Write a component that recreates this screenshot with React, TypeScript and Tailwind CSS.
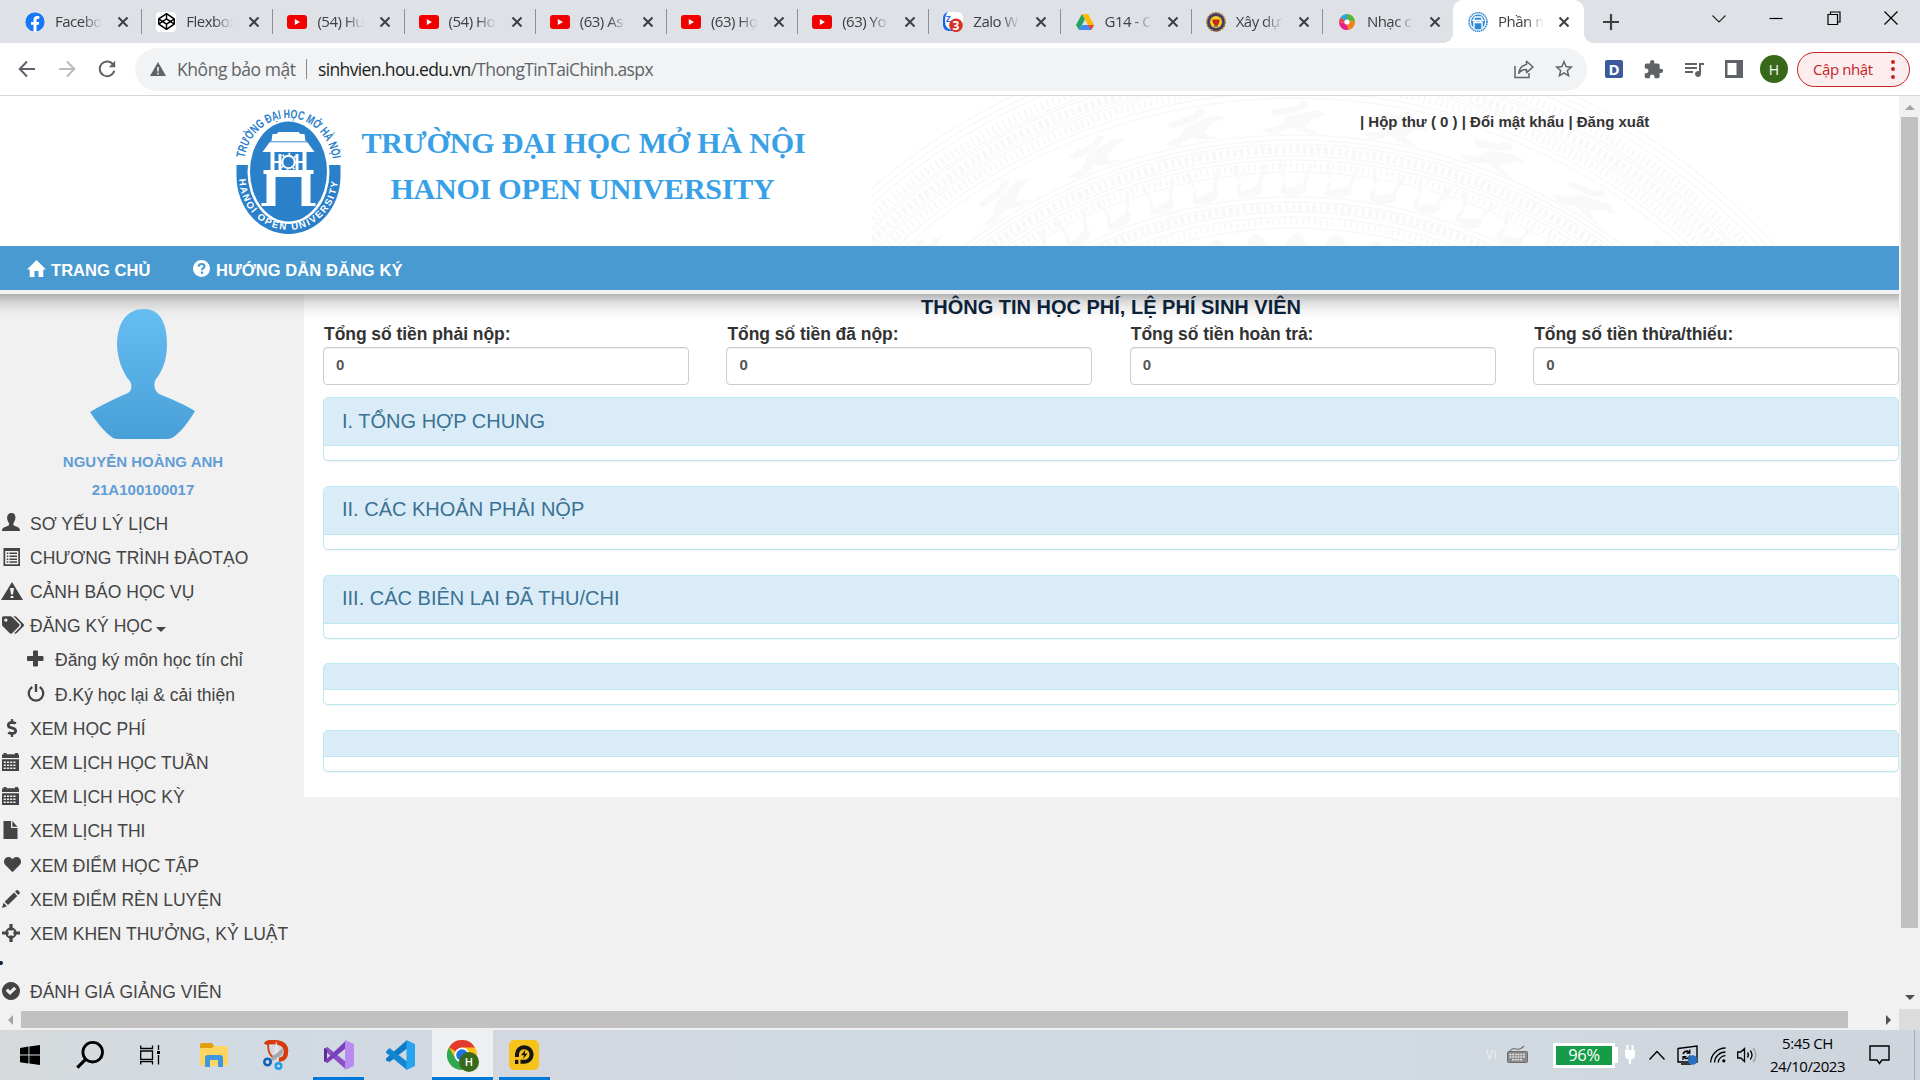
import React from "react";
import { FaFacebook, FaCodepen, FaTags, FaDollarSign, FaHeart } from "react-icons/fa";
import { MdExtension, MdStarBorder, MdQueueMusic } from "react-icons/md";

type SvgProps = { className?: string };

/* ---------- favicons ---------- */

const YouTube = () => (
  <svg viewBox="0 0 20 20" className="size-5">
    <rect x="0" y="3" width="20" height="14" rx="3" fill="#f20000" />
    <path d="M7.8 7 L13 10 L7.8 13 Z" fill="#fff" />
  </svg>
);

const Codepen = () => (
  <span className="flex size-5 items-center justify-center rounded-sm bg-white">
    <FaCodepen className="size-[17px] text-black" />
  </span>
);

const Zalo = () => (
  <svg viewBox="0 0 20 20" className="size-5">
    <rect x="0" y="0" width="19" height="19" rx="6" fill="#1666e8" />
    <path d="M5 0 H14 Q20 0 20 6 V12 Q20 18 14 18 H9 Q2 17 2 9 Q2 3 5 0 Z" fill="#fff" />
    <text x="3" y="10" fontSize="8" fontWeight="700" fill="#1666e8" fontFamily="Open Sans">Z</text>
    <circle cx="13" cy="13.3" r="6.8" fill="#d93025" />
    <text x="13" y="17.6" textAnchor="middle" fontSize="12" fontWeight="700" fill="#fff" fontFamily="Open Sans">3</text>
  </svg>
);

const Drive = () => (
  <svg viewBox="0 0 20 20" className="size-5">
    <path d="M7 2 L1 13 L4 18 L10 7.2 Z" fill="#1fa463" />
    <path d="M7 2 H13 L19 13 H13 Z" fill="#ffba00" />
    <path d="M6.8 13 H19 L16 18 H4 Z" fill="#4688f4" />
    <path d="M13 13 H19 L16 18 Z" fill="#ea4335" />
  </svg>
);

const Seal = () => (
  <svg viewBox="0 0 20 20" className="size-5">
    <circle cx="10" cy="10" r="9.2" fill="#4a3a6b" stroke="#a5772c" strokeWidth="1.5" strokeDasharray="2 1" />
    <circle cx="10" cy="10" r="6" fill="#f0d51c" />
    <path d="M6.5 7.5 H13.5 V10 L12 13 H8.5 L6.5 10 Z" fill="#c9251d" />
    <path d="M8 14 H12" stroke="#4a3a6b" strokeWidth="1.2" />
  </svg>
);

const Music = () => (
  <svg viewBox="0 0 20 20" className="size-5">
    <path d="M10 10 L3.5 5.5 A8 8 0 0 1 10 2 Z" fill="#2aa4e4" />
    <path d="M10 10 V2 A8 8 0 0 1 18 9 Z" fill="#5cb531" />
    <path d="M10 10 L18 9 A8 8 0 0 1 11 18 Z" fill="#f57f17" />
    <path d="M10 10 L11 18 A8 8 0 0 1 2 11 Z" fill="#e91e83" />
    <path d="M10 10 L2 11 A8 8 0 0 1 3.5 5.5 Z" fill="#e04848" />
    <circle cx="10" cy="10" r="2.6" fill="#fff" />
  </svg>
);

const HouMini = () => (
  <svg viewBox="0 0 20 20" className="size-5">
    <ellipse cx="10" cy="10" rx="9" ry="9.3" fill="none" stroke="#2d87d3" strokeWidth="1.6" strokeDasharray="1.4 .6" />
    <ellipse cx="10" cy="10" rx="7" ry="7.6" fill="#2d87d3" />
    <path d="M6 16 V10.5 H14 V16 M5 8.5 L7 5 H13 L15 8.5 Z M7.5 9 V10 M12.5 9 V10" fill="none" stroke="#fff" strokeWidth="1.4" />
  </svg>
);

const tabs = [
  { title: "Facebo", icon: <FaFacebook className="size-5 rounded-full bg-white text-[#1877f2]" /> },
  { title: "Flexbox", icon: <Codepen /> },
  { title: "(54) Hu", icon: <YouTube /> },
  { title: "(54) Ho", icon: <YouTube /> },
  { title: "(63) As", icon: <YouTube /> },
  { title: "(63) Họ", icon: <YouTube /> },
  { title: "(63) Yo", icon: <YouTube /> },
  { title: "Zalo W", icon: <Zalo /> },
  { title: "G14 - C", icon: <Drive /> },
  { title: "Xây dự", icon: <Seal /> },
  { title: "Nhạc c", icon: <Music /> },
];

const CloseX = () => (
  <svg viewBox="0 0 12 12" className="size-3 shrink-0">
    <path d="M1.5 1.5 L10.5 10.5 M10.5 1.5 L1.5 10.5" stroke="#3c4043" strokeWidth="2" />
  </svg>
);

function Tab({ title, icon, active }: { title: string; icon: React.ReactNode; active?: boolean }) {
  return (
    <div
      className={
        active
          ? "relative flex h-[43px] w-[131.2px] shrink-0 items-center rounded-t-[10px] bg-white pl-[15px] before:absolute before:bottom-0 before:-left-2.5 before:size-2.5 before:bg-[radial-gradient(circle_at_0_0,transparent_10px,#fff_10px)] after:absolute after:-right-2.5 after:bottom-0 after:size-2.5 after:bg-[radial-gradient(circle_at_100%_0,transparent_10px,#fff_10px)]"
          : "flex h-[43px] w-[131.2px] shrink-0 items-center pl-[15px]"
      }
    >
      <span className="flex size-5 shrink-0">{icon}</span>
      <span
        className={
          active
            ? "ml-2.5 w-[46px] text-[15px] tracking-[-0.5px] whitespace-nowrap text-[#3c4043] [mask-image:linear-gradient(90deg,#000_60%,transparent_100%)]"
            : "ml-2.5 w-[47px] text-[15px] tracking-[-0.5px] whitespace-nowrap text-[#3c4043] [mask-image:linear-gradient(90deg,#000_60%,transparent_100%)]"
        }
      >
        {title}
      </span>
      <span className={active ? "ml-3.5 flex" : "ml-[15px] flex"}>
        <CloseX />
      </span>
    </div>
  );
}

function TabStrip() {
  return (
    <div className="flex h-[43px] bg-[#dee1e6] pl-[10px]">
      {tabs.map((t, i) => (
        <div key={i} className="flex items-center">
          <Tab {...t} />
          {i < tabs.length - 1 && <div className="-mr-px h-[25px] w-px bg-[#8d9196]" />}
        </div>
      ))}
      <Tab title="Phần m" icon={<HouMini />} active />
      <svg viewBox="0 0 16 16" className="mt-3.5 ml-[19px] size-4 shrink-0">
        <path d="M8 0 V16 M0 8 H16" stroke="#3c4043" strokeWidth="2.2" />
      </svg>
      <div className="mt-[11px] ml-auto flex items-start gap-[43.3px] pr-[22px]">
        <svg viewBox="0 0 14 14" className="size-3.5">
          <path d="M.5 4.5 L7 11 L13.5 4.5" fill="none" stroke="#222" strokeWidth="1.1" />
        </svg>
        <svg viewBox="0 0 14 14" className="size-3.5">
          <path d="M.5 7.5 H13.5" stroke="#000" strokeWidth="1.2" />
        </svg>
        <svg viewBox="0 0 14 14" className="size-3.5">
          <path d="M1 3.5 H10.5 V13.5 H1 Z M3.5 3.5 V1 H13 V11 H10.5" fill="none" stroke="#000" strokeWidth="1.2" />
        </svg>
        <svg viewBox="0 0 14 14" className="size-3.5">
          <path d="M.5 .5 L13.5 13.5 M13.5 .5 L.5 13.5" stroke="#000" strokeWidth="1.2" />
        </svg>
      </div>
    </div>
  );
}

function Toolbar() {
  return (
    <div className="flex h-[53px] items-center border-b border-[#d5d7da] bg-white pl-[18px]">
      <svg viewBox="0 0 18 18" className="size-[18px]">
        <path d="M17 9 H2 M9 1.5 L1.7 9 L9 16.5" fill="none" stroke="#5f6368" strokeWidth="2" />
      </svg>
      <svg viewBox="0 0 18 18" className="ml-[22px] size-[18px]">
        <path d="M1 9 H16 M9 1.5 L16.3 9 L9 16.5" fill="none" stroke="#babcbe" strokeWidth="2" />
      </svg>
      <svg viewBox="0 0 18 18" className="ml-[22px] size-[18px]">
        <path d="M15.5 5 A7.4 7.4 0 1 0 16.3 10.8" fill="none" stroke="#5f6368" strokeWidth="2" />
        <path d="M17.2 .8 V7.2 H10.8 Z" fill="#5f6368" />
      </svg>
      <div className="ml-[19px] flex h-[43px] w-[1452px] items-center rounded-full bg-[#f1f3f4] pl-[15px] text-[17.5px]">
        <svg viewBox="0 0 16 14" className="h-3.5 w-4">
          <path d="M8 0 L16 14 H0 Z" fill="#5f6368" />
          <path d="M8 5 V9.5 M8 10.8 V12.5" stroke="#f1f3f4" strokeWidth="1.6" />
        </svg>
        <span className="ml-[11px] w-[119px] tracking-[-0.45px] whitespace-nowrap text-[#5f6368]">Không bảo mật</span>
        <span className="ml-2.5 h-5 w-px bg-[#868a8e]" />
        <span className="ml-[11px] tracking-[-0.63px] whitespace-nowrap text-[#5f6368]">
          <span className="text-[#1c1d20]">sinhvien.hou.edu.vn</span>/ThongTinTaiChinh.aspx
        </span>
        <svg viewBox="0 0 20 20" className="mr-[19px] ml-auto size-5">
          <path d="M1 7 V18.5 H15 V14" fill="none" stroke="#5f6368" strokeWidth="1.5" />
          <path d="M12.5 2.2 L19 8 L12.5 13.6 V10.5 Q7.5 10.3 4.8 14.3 Q5.6 6.5 12.5 5.6 Z" fill="none" stroke="#5f6368" strokeWidth="1.5" strokeLinejoin="round" />
        </svg>
        <MdStarBorder className="mr-3 size-[22px] text-[#5f6368]" />
      </div>
      <div className="ml-[18px] flex h-[18px] w-[18px] items-center justify-center rounded-[2px] bg-[#3d5a9e] text-[15px] leading-none font-bold text-white">
        D
      </div>
      <MdExtension className="ml-[20px] size-[21px] text-[#5f6368]" />
      <MdQueueMusic className="ml-[18px] size-6 text-[#5f6368]" />
      <svg viewBox="0 0 18 18" className="ml-[19px] size-[18px]">
        <path d="M0 0 H18 V18 H0 Z M2.5 3 V15 H11.5 V3 Z" fillRule="evenodd" fill="#5f6368" />
      </svg>
      <div className="ml-[17px] flex size-7 items-center justify-center rounded-full bg-[#38691a] text-[14px] text-white">H</div>
      <div className="ml-[9px] flex h-[35px] w-[113px] items-center rounded-full border-[1.5px] border-[#c5221f] bg-[#fceeee] pl-[15px] text-[15px] text-[#c5221f]">
        <span className="w-[61px] tracking-[-0.4px] whitespace-nowrap">Cập nhật</span>
        <span className="ml-[17px] flex flex-col gap-[3.5px]">
          <i className="size-1 rounded-full bg-[#c5221f]" />
          <i className="size-1 rounded-full bg-[#c5221f]" />
          <i className="size-1 rounded-full bg-[#c5221f]" />
        </span>
      </div>
    </div>
  );
}

/* ---------- university header ---------- */

const Emblem = ({ className }: SvgProps) => (
  <svg viewBox="0 0 104 126" className={className}>
    <defs>
      <path id="topArc" d="M7.5 58 A44.5 48 0 0 1 96.5 58 V70" />
      <path id="bottomArc" d="M2.5 69 A49.5 53 0 0 0 101.5 69" />
    </defs>
    <path d="M0 57 H104 V68 A52 58 0 0 1 0 68 Z" fill="#2a80c9" />
    <ellipse cx="52" cy="64" rx="41" ry="52" fill="#fff" />
    <ellipse cx="52" cy="63.5" rx="38.5" ry="50" fill="#2a80c9" />
    <g fill="#fff">
      <path d="M42 24 H62 L64 26 H68 L69 33 H35 L36 26 H40 Z" />
      <path d="M34 33 H70 L78 44 H26 Z" />
      <path d="M34 44 H38 V63 H34 Z M66 44 H70 V63 H66 Z M42 46 H45 V63 H42 Z M59 46 H62 V63 H59 Z" />
      <path d="M27 62 H77 V66 H74 V69 H30 V66 H27 Z" />
      <path d="M30 69 H39 V98 H25 V95 H30 Z M65 69 H74 V95 H79 V98 H65 Z" />
      <path d="M37 53 H45 V55 H37 Z M59 53 H67 V55 H59 Z" />
    </g>
    <path d="M30 33.8 H74" stroke="#2a80c9" strokeWidth=".9" />
    <circle cx="52" cy="54" r="6.2" fill="#2a80c9" stroke="#fff" strokeWidth="2" />
    <circle cx="52" cy="54" r="8.2" fill="none" stroke="#fff" strokeWidth="2" strokeDasharray="1.8 4.6" />
    <text fill="#2a80c9" fontSize="12.5" fontWeight="700" fontFamily="Liberation Sans, sans-serif">
      <textPath href="#topArc" startOffset="8" textLength="130" lengthAdjust="spacingAndGlyphs">TRƯỜNG ĐẠI HỌC MỞ HÀ NỘI</textPath>
    </text>
    <text fill="#fff" fontSize="9.6" fontWeight="700" fontFamily="Liberation Sans, sans-serif">
      <textPath href="#bottomArc" startOffset="2" textLength="154" lengthAdjust="spacing">HANOI OPEN UNIVERSITY</textPath>
    </text>
  </svg>
);

const DrumPattern = ({ className }: SvgProps) => {
  const ring = (r: number, w: number, dash?: string, c = "#f8f8f8") => (
    <circle key={r} cx="422" cy="584" r={r} fill="none" stroke={c} strokeWidth={w} strokeDasharray={dash} />
  );
  const birds = Array.from({ length: 25 }, (_, i) => -62 + i * 5.2);
  return (
    <svg viewBox="0 0 930 150" className={className}>
      {[648, 642, 636, 620, 617, 604, 601, 588, 582].map((r) => ring(r, 1.5))}
      {ring(627, 9, "2 4")}
      {ring(610, 8, "4 3")}
      {ring(595, 8, "2 4")}
      {[545, 540, 536, 524, 520, 508].map((r) => ring(r, 1.5))}
      {ring(530, 8, "4 3")}
      {ring(514, 7, "2 4")}
      {[483, 478, 468, 463, 452].map((r) => ring(r, 1.5))}
      {ring(473, 7, "4 3")}
      {ring(458, 6, "2 4")}
      {birds.map((a, i) => (
        <g key={a} transform={`rotate(${a} 422 584)`} fill="#f9f9f9">
          <path d="M406 98 Q404 88 411 82 L410 93 L420 90 Q428 89 430 82 L432 92 Q430 99 416 100 Z" />
          <path d="M409 82 L405 66 M430 84 L436 68" stroke="#f9f9f9" strokeWidth="3.5" />
          {i % 2 === 0 && (
            <path d="M386 34 L402 30 L412 20 L440 14 L452 18 L438 22 L428 30 L444 38 L430 37 L414 32 L398 39 Z M394 14 L420 10 L428 4 L434 10 L420 17 L398 20 Z" />
          )}
          <path d="M412 146 Q416 134 426 138 L434 150 H410 Z" />
        </g>
      ))}
    </svg>
  );
};

function SiteHeader() {
  return (
    <div className="relative flex h-[150px] bg-white">
      <DrumPattern className="absolute top-0 left-[872px] h-[150px] w-[930px]" />
      <Emblem className="mt-3 ml-[236px] h-[126px] w-[105px] shrink-0" />
      <div className="mt-6 ml-[19px] w-[447px] text-center font-['Liberation_Serif',serif] text-[30px] leading-[46px] font-bold whitespace-nowrap text-[#37a0e6]">
        <div className="tracking-[-0.17px]">TRƯỜNG ĐẠI HỌC MỞ HÀ NỘI</div>
        <div className="-ml-0.5 tracking-[-0.2px]">HANOI OPEN UNIVERSITY</div>
      </div>
      <div className="relative mt-[15px] ml-[553px] text-[15px] leading-[22px] font-bold whitespace-nowrap text-[#333]">
        | Hộp thư ( 0 ) | Đổi mật khẩu | Đăng xuất
      </div>
    </div>
  );
}

function Nav() {
  return (
    <div className="flex h-12 items-center border-b-4 border-[#f1f1f1] bg-[#489ad1] pt-1 pl-[27px] text-[16.5px] tracking-[0.06px] font-bold text-white">
      <svg viewBox="0 0 19 17" className="-mt-1 h-[17px] w-[19px]">
        <path d="M9.5 0 L19 9.5 H16.3 V17 H11.5 V11 H7.5 V17 H2.7 V9.5 H0 Z" fill="#fff" />
      </svg>
      <span className="ml-[5px] w-[98px] whitespace-nowrap">TRANG CHỦ</span>
      <svg viewBox="0 0 17 17" className="-mt-1 ml-[44px] size-[17px]">
        <circle cx="8.5" cy="8.5" r="8.5" fill="#fff" />
        <path d="M5.6 6.6 Q5.8 4 8.6 4 Q11.4 4 11.4 6.4 Q11.4 7.6 10 8.4 Q9 9 9 10.2" fill="none" stroke="#489ad1" strokeWidth="2.2" />
        <path d="M7.8 11.6 H10.2 V13.8 H7.8 Z" fill="#489ad1" />
      </svg>
      <span className="ml-1.5 whitespace-nowrap">HƯỚNG DẪN ĐĂNG KÝ</span>
    </div>
  );
}

/* ---------- sidebar ---------- */

const S = ({ children }: { children: React.ReactNode }) => (
  <svg viewBox="0 0 18 18" className="size-[18px]" fill="#444">
    {children}
  </svg>
);
const UserIcon = <S><path d="M9.5 0 C12.5 0 13.6 2 13.4 5 C13.3 7.5 12 9 11.4 10.2 C11.3 12 11.6 12.6 13.5 13.3 C16 14.2 18 14.8 18 18 H0 C0 14.8 2.5 14.2 5 13.3 C7 12.6 7.2 12 7 10.2 C6.3 9 5.2 7.5 5.1 5 C5 2 6.5 0 9.5 0 Z" /></S>;
const ListIcon = <S><path fillRule="evenodd" d="M1.5 0 H18 V18 H1.5 Z M3.2 3 V16.3 H16.3 V3 Z" /><path d="M4.8 4.5 H6.3 V6 H4.8 Z M7.5 4.5 H15 V6 H7.5 Z M4.8 7.5 H6.3 V9 H4.8 Z M7.5 7.5 H15 V9 H7.5 Z M4.8 10.5 H6.3 V12 H4.8 Z M7.5 10.5 H15 V12 H7.5 Z M4.8 13.3 H6.3 V14.8 H4.8 Z M7.5 13.3 H15 V14.8 H7.5 Z" /></S>;
const WarnIcon = (
  <svg viewBox="0 0 22 18" className="-ml-px h-[18px] w-[22px]" fill="#444">
    <path fillRule="evenodd" d="M11 0 L22 18 H0 Z M9 6 L10 12.5 H12 L13 6 Z M9.6 14 V16 H12.4 V14 Z" />
  </svg>
);
const CalIcon = <S><path fillRule="evenodd" d="M0 1.5 H1.5 V0 H4.5 V1.2 H13 V0 H16 V1.5 H17 V5 H0 Z M0 6.3 H17 V18 H0 Z M1.7 8.5 V10 H3.9 V8.5 Z M4.9 8.5 V10 H7.1 V8.5 Z M8.1 8.5 V10 H10.3 V8.5 Z M11.3 8.5 V10 H13.5 V8.5 Z M1.7 11.5 V13 H3.9 V11.5 Z M4.9 11.5 V13 H7.1 V11.5 Z M8.1 11.5 V13 H10.3 V11.5 Z M11.3 11.5 V13 H13.5 V11.5 Z M1.7 14.5 V16 H3.9 V14.5 Z M4.9 14.5 V16 H7.1 V14.5 Z M8.1 14.5 V16 H10.3 V14.5 Z M11.3 14.5 V16 H13.5 V14.5 Z" /></S>;
const FileIcon = <S><path d="M1.5 0 H9 V7 H15.5 V18 H1.5 Z M10.3 0 L15.5 5.8 H10.3 Z" /></S>;
const PencilIcon = <S><path d="M0 18 L1.5 12.8 L5 16.3 Z M2.6 11.7 L12 2.6 L15.3 5.9 L6 15.1 Z M13 1.6 L14.5 .3 Q15.5 -.2 16.2 .5 L17.6 2 Q18.3 2.8 17.5 3.6 L16.3 4.9 Z" /></S>;
const TargetIcon = <S><path d="M7.4 0 H10.6 V6.6 H7.4 Z M7.4 11.4 H10.6 V18 H7.4 Z M0 7.4 H6.6 V10.6 H0 Z M11.4 7.4 H18 V10.6 H11.4 Z" /><circle cx="9" cy="9" r="4.6" fill="none" stroke="#444" strokeWidth="2.1" /></S>;
const OkIcon = <S><path fillRule="evenodd" d="M9 0 A9 9 0 1 1 8.99 0 Z M3.6 8.8 L8 13 L14.3 7 L12 4.8 L8 8.8 L6 6.6 Z" /></S>;
const PlusIcon = <S><path d="M6 1.5 Q6 .5 7 .5 H10 Q11 .5 11 1.5 V6 H15.5 Q16.5 6 16.5 7 V10 Q16.5 11 15.5 11 H11 V15.5 Q11 16.5 10 16.5 H7 Q6 16.5 6 15.5 V11 H1 Q0 11 0 10 V7 Q0 6 1 6 H6 Z" /></S>;
const PowerIcon = <S><path d="M5.3 3 A7.3 7.3 0 1 0 12.7 3" fill="none" stroke="#444" strokeWidth="2.3" /><path d="M7.8 0 H10.2 V8 H7.8 Z" /></S>;

type Item = { label: string; icon: React.ReactNode; sub?: boolean; caret?: boolean };
const items: Item[] = [
  { label: "SƠ YẾU LÝ LỊCH", icon: UserIcon },
  { label: "CHƯƠNG TRÌNH ĐÀOTẠO", icon: ListIcon },
  { label: "CẢNH BÁO HỌC VỤ", icon: WarnIcon },
  { label: "ĐĂNG KÝ HỌC", icon: <FaTags className="size-[22px] text-[#444]" />, caret: true },
  { label: "Đăng ký môn học tín chỉ", icon: PlusIcon, sub: true },
  { label: "Đ.Ký học lại & cải thiện", icon: PowerIcon, sub: true },
  { label: "XEM HỌC PHÍ", icon: <FaDollarSign className="ml-px size-[18px] text-[#444]" /> },
  { label: "XEM LỊCH HỌC TUẦN", icon: CalIcon },
  { label: "XEM LỊCH HỌC KỲ", icon: CalIcon },
  { label: "XEM LỊCH THI", icon: FileIcon },
  { label: "XEM ĐIỂM HỌC TẬP", icon: <FaHeart className="ml-0.5 size-[17px] text-[#444]" /> },
  { label: "XEM ĐIỂM RÈN LUYỆN", icon: PencilIcon },
  { label: "XEM KHEN THƯỞNG, KỶ LUẬT", icon: TargetIcon },
];

function MenuRow({ label, icon, sub, caret }: Item) {
  return (
    <div className={sub ? "flex h-[34.2px] items-center pl-[27px]" : "flex h-[34.2px] items-center pl-0.5"}>
      <span className="-mt-1 flex w-7 shrink-0 items-center">{icon}</span>
      <span className="whitespace-nowrap">{label}</span>
      {caret && <span className="mt-1 ml-[3px] border-x-[5px] border-t-[5px] border-x-transparent border-t-[#444]" />}
    </div>
  );
}

function Sidebar() {
  return (
    <div className="w-[304px] shrink-0 text-[17.5px] leading-none text-[#444]">
      <div className="flex flex-col items-center pr-[18px] text-[15px] leading-7 font-bold text-[#629dd6]">
        <svg viewBox="0 0 106 132" className="mt-[14px] h-[132px] w-[106px]">
          <defs>
            <linearGradient id="skin" x1="0" y1="0" x2="0" y2="1">
              <stop offset="0" stopColor="#66bdf2" />
              <stop offset="1" stopColor="#48a0d8" />
            </linearGradient>
          </defs>
          <path d="M54 1 C68 1 77 12 77 36 C77 54 71 65 66 71 C63 76 64 82 69 86 C82 91 95 97 105 103 C98 115 90 125 82 130 Q80 131 76 131 H29 Q25 131 23 130 C13 123 6 113 0 104 C11 97 24 91 38 85 C43 82 42 74 38 71 C32 62 28 52 27 38 C27 14 37 1 54 1 Z" fill="url(#skin)" />
        </svg>
        <div className="mt-2">NGUYỄN HOÀNG ANH</div>
        <div>21A100100017</div>
      </div>
      <div className="mt-[3.4px]">
        {items.map((it) => (
          <MenuRow key={it.label} {...it} />
        ))}
      </div>
      <div className="mt-2 flex h-[6px] items-center">
        <span className="h-1 w-[2.5px] rounded-r-full bg-[#0b2239]" />
      </div>
      <div className="mt-[10px]">
        <MenuRow label="ĐÁNH GIÁ GIẢNG VIÊN" icon={OkIcon} />
      </div>
    </div>
  );
}

/* ---------- content ---------- */

const totals = ["Tổng số tiền phải nộp:", "Tổng số tiền đã nộp:", "Tổng số tiền hoàn trả:", "Tổng số tiền thừa/thiếu:"];

function Panel({ title }: { title?: string }) {
  return (
    <div className="overflow-hidden rounded-[5px] border border-[#bce8f1] bg-white shadow-[0_1px_1px_rgba(0,0,0,0.05)]">
      <div
        className={
          title
            ? "flex h-12 items-center border-b border-[#bce8f1] bg-[#daecf8] pb-0.5 pl-[18px] text-[20px] text-[#3a7293]"
            : "h-[26px] border-b border-[#bce8f1] bg-[#daecf8]"
        }
      >
        {title}
      </div>
      <div className="h-[14px]" />
    </div>
  );
}

function Content() {
  return (
    <div className="h-[503px] flex-1 bg-white bg-[linear-gradient(#b4b4b4,#dcdcdc_8px,#f4f4f4_17px,#fff_26px)] bg-[length:100%_26px] bg-no-repeat pl-[19px]">
      <div className="pt-px pb-px text-center text-[20px] leading-6 font-bold text-[#0b2239]">THÔNG TIN HỌC PHÍ, LỆ PHÍ SINH VIÊN</div>
      <div className="grid grid-cols-4 gap-x-[37.5px]">
        {totals.map((label) => (
          <div key={label}>
            <div className="pt-[2px] pl-px text-[17.5px] leading-[25px] tracking-[-0.05px] font-bold whitespace-nowrap text-[#333]">{label}</div>
            <div className="flex h-[38px] items-center rounded-[4px] border border-[#ccc] bg-white pb-0.5 pl-3 text-[15px] font-bold text-[#555] shadow-[inset_0_1px_1px_rgba(0,0,0,0.075)]">
              0
            </div>
          </div>
        ))}
      </div>
      <div className="mt-3 flex flex-col gap-[24.75px]">
        <Panel title="I. TỔNG HỢP CHUNG" />
        <Panel title="II. CÁC KHOẢN PHẢI NỘP" />
        <Panel title="III. CÁC BIÊN LAI ĐÃ THU/CHI" />
        <Panel />
        <Panel />
      </div>
    </div>
  );
}

/* ---------- taskbar ---------- */

const Explorer = () => (
  <svg viewBox="0 0 28 24" className="h-6 w-7">
    <path d="M0 2 Q0 0 2 0 H12 L14 3 V6 H0 Z" fill="#dfa00c" />
    <path d="M0 5 H12 L14 3 H26 Q28 3 28 5 V21 Q28 23 26 23 H2 Q0 23 0 21 Z" fill="#fed462" />
    <path d="M5 24 V15 Q5 12 8 12 H20 Q23 12 23 15 V24 H18 V17 H10 V24 Z" fill="#3d98e0" />
  </svg>
);
const Snip = () => (
  <svg viewBox="0 0 26 30" className="h-[30px] w-[26px]">
    <path d="M3 4.5 Q4 2 9 2 Q23 2 23 11 Q23 20 16 19.5" fill="none" stroke="#d83b0b" strokeWidth="4.5" />
    <path d="M5 5 Q5 17 14 19" fill="none" stroke="#d83b0b" strokeWidth="1.8" />
    <path d="M13 1 L17 14 L14 22 L11 14 Z" fill="#e3e4e6" />
    <path d="M20 8 Q21 15 14 18 L9 21 L7 18.5 L14 13 Z" fill="#a5a9ad" />
    <circle cx="4.5" cy="22" r="3.2" fill="none" stroke="#0f63b5" strokeWidth="2.6" />
    <circle cx="15.5" cy="26" r="2.8" fill="none" stroke="#1f9ee8" strokeWidth="2.4" />
  </svg>
);
const VisualStudio = () => (
  <svg viewBox="0 0 30 30" className="size-[30px]">
    <path d="M0 8.5 L3.5 7 L22 22 V29.5 L0 10 Z" fill="#8b4fc6" />
    <path d="M0 8.5 L3 9.5 V20.5 L0 21.5 Z" fill="#5c2d91" />
    <path d="M0 21.5 L22 .5 V8 L3.5 23 Z" fill="#7a3fbd" />
    <path d="M21 0 L30 4 V26 L21 30 Z" fill="#b98af0" />
  </svg>
);
const VSCode = () => (
  <svg viewBox="0 0 30 30" className="size-[30px]">
    <path d="M1 18.5 L22 0 V8.5 L4.5 22 L1 20.5 Z" fill="#0a7bc6" />
    <path d="M1 11.5 L4.5 8 L22 21.5 V30 L1 12.8 Z" fill="#1186d2" />
    <path d="M21.5 0 L30 4 V26 L21.5 30 Z" fill="#26a5ee" />
  </svg>
);
const Chrome = () => (
  <svg viewBox="0 0 32 32" className="size-8">
    <circle cx="15" cy="15" r="15" fill="#fbc116" />
    <path d="M15 15 L2 7.5 A15 15 0 0 1 28 7.5 H15 Z" fill="#e33b2e" />
    <path d="M2 7.5 A15 15 0 0 0 15 30 L21.5 18.7 L8.5 18.7 Z" fill="#2da94f" />
    <circle cx="15" cy="15" r="7.5" fill="#fff" />
    <circle cx="15" cy="15" r="5.8" fill="#1a73e8" />
    <circle cx="22" cy="22" r="10" fill="#38691a" />
    <text x="22" y="26" textAnchor="middle" fontSize="11" fontWeight="600" fill="#fff" fontFamily="Open Sans">H</text>
  </svg>
);
const Player = () => (
  <svg viewBox="0 0 30 30" className="size-[30px]">
    <rect width="30" height="30" rx="5" fill="#f6c21c" />
    <path d="M8 17 V14 A7.3 7.3 0 1 1 15.5 21.8 H11.5" fill="none" stroke="#161616" strokeWidth="4" />
    <path d="M6 19.8 H9.3 V24 H6 Z" fill="#161616" />
    <path d="M16.5 9.5 L12 15.3 H15 L14 19 L18.6 13.6 H15.6 Z" fill="#161616" />
  </svg>
);

function Taskbar() {
  return (
    <div className="flex h-[50px] bg-[linear-gradient(90deg,#d6dadc,#d1dae3_15%,#d3d7df_27%,#d0dae1_45%,#d2dae2_70%,#ced5dc)]">
      <div className="flex w-[60px] items-center justify-center">
        <svg viewBox="0 0 20 20" className="size-5">
          <path d="M0 3 L8.5 1.6 V9.6 H0 Z M9.4 1.5 L20 0 V9.6 H9.4 Z M0 10.5 H8.5 V18.5 L0 17.2 Z M9.4 10.5 H20 V20 L9.4 18.6 Z" />
        </svg>
      </div>
      <div className="flex w-[60px] items-center justify-center">
        <svg viewBox="0 0 28 28" className="size-7">
          <circle cx="16.7" cy="11.2" r="9.8" fill="none" stroke="#000" strokeWidth="2.8" />
          <path d="M9.8 18.2 L1.3 26.7" stroke="#000" strokeWidth="3.2" />
        </svg>
      </div>
      <div className="flex w-[60px] items-center justify-center">
        <svg viewBox="0 0 21 20" className="h-5 w-[21px]" fill="none" stroke="#000" strokeWidth="1.3">
          <path d="M.7 .5 V3.5 H12.5 V.5 M.7 6 H12.5 V14.3 H.7 Z M.7 19.5 V16.5 H12.5 V19.5 M18.5 0 V5 M18.5 10 V19.5" />
          <path d="M17 6 H20 V9 H17 Z" fill="#000" stroke="none" />
        </svg>
      </div>
      <div className="flex w-[68px] items-center justify-center"><Explorer /></div>
      <div className="flex w-[65px] items-center justify-center pr-[9px]"><Snip /></div>
      <div className="flex w-[51px] items-center justify-center border-b-[3px] border-[#0078d7] pt-[3px]"><VisualStudio /></div>
      <div className="flex w-[68px] items-center justify-center pl-2.5 pr-1.5"><VSCode /></div>
      <div className="flex w-[61px] items-center justify-center border-b-[3px] border-[#0078d7] bg-[#edf0f3] pt-[5px]"><Chrome /></div>
      <div className="ml-1.5 flex w-[51px] items-center justify-center border-b-[3px] border-[#0078d7] pt-[3px] pr-[2px]"><Player /></div>

      <div className="ml-auto flex items-center text-black">
        <span className="w-[21px] text-[12px] text-[#f2efe8]">VI</span>
        <svg viewBox="0 0 21 18" className="mb-[3px] h-[18px] w-[21px]">
          <path d="M3 6 Q5 2.5 9 4 Q13 5.5 17 1" fill="none" stroke="#777" strokeWidth="1.2" />
          <rect x=".5" y="6.5" width="20" height="11" rx="1" fill="#8b8b8b" stroke="#6d6d6d" />
          <path d="M2.5 9.5 H18.5 M2.5 12 H18.5 M5 14.7 H16" stroke="#e8e8e8" strokeWidth="1.4" strokeDasharray="1.8 .9" />
        </svg>
        <span className="ml-[25px] flex h-[25px] w-[62px] items-center justify-center border-[3px] border-white bg-[#169c48] text-[16.5px] tracking-[-0.3px] text-white">96%</span>
        <span className="h-4 w-[3px] bg-white" />
        <svg viewBox="0 0 12 20" className="ml-1.5 h-5 w-3">
          <path d="M2.5 0 H4.5 V5 H7.5 V0 H9.5 V5 H11 V10 Q11 14 7 14.5 V19 H5 V14.5 Q1 14 1 10 V5 H2.5 Z" fill="#fff" />
        </svg>
        <svg viewBox="0 0 16 10" className="ml-[13px] h-2.5 w-4">
          <path d="M.5 9.5 L8 1.5 L15.5 9.5" fill="none" stroke="#000" strokeWidth="1.4" />
        </svg>
        <svg viewBox="0 0 21 20" className="ml-3 h-5 w-[21px]">
          <path d="M1 3.5 L20 1 V17 H1 Z M4 19 H14" fill="none" stroke="#000" strokeWidth="1.4" />
          <path d="M6 9 Q7 6 10.5 6 L12.5 7.5 M12.8 4.5 V8 H9.5 M13 10.5 Q12 13.7 8.5 13.5 L6.5 12 M6 15 V11.7 H9.5" fill="none" stroke="#000" strokeWidth="1.3" />
          <circle cx="15.5" cy="15" r="4.8" fill="#2a6fbe" />
        </svg>
        <svg viewBox="0 0 16 16" className="ml-3 size-4" fill="none" stroke="#000" strokeWidth="1.3">
          <path d="M.7 15.5 A15 15 0 0 1 15.5 1 M4.5 15.5 A11 11 0 0 1 15.5 5 M8.2 15.5 A7.5 7.5 0 0 1 15.5 8.6" />
          <circle cx="13.8" cy="13.8" r="1.6" fill="#000" stroke="none" />
        </svg>
        <svg viewBox="0 0 21 18" className="ml-[11px] h-[18px] w-[21px]" fill="none" stroke="#000" strokeWidth="1.3">
          <path d="M.7 6 H3.8 L7.5 2.5 V15.5 L3.8 12 H.7 Z M10.5 6.5 Q12.3 9 10.5 11.5 M13.3 4.5 Q16.7 9 13.3 13.5" />
          <path d="M16.2 2 Q21.5 9 16.2 16" stroke="#9aa0a6" />
        </svg>
        <div className="ml-2 w-[83px] text-center text-[15px] leading-[23px] tracking-[-0.45px] whitespace-nowrap">
          <div>5:45 CH</div>
          <div>24/10/2023</div>
        </div>
        <svg viewBox="0 0 21 20" className="ml-5 h-5 w-[21px]">
          <path d="M1 1 H20 V15 H13 L10.5 18.5 L8 15 H1 Z" fill="none" stroke="#000" strokeWidth="1.4" />
        </svg>
        <span className="mr-[5px] ml-6 h-[50px] w-px bg-[#a3abb1]" />
      </div>
    </div>
  );
}

export default function App() {
  return (
    <div className="flex h-[1080px] w-[1920px] flex-col overflow-hidden bg-[#f1f1f1] font-['Open_Sans','Noto_Sans',sans-serif]">
      <TabStrip />
      <Toolbar />
      <div className="flex h-[913px]">
        <div className="w-[1899px] overflow-hidden font-['Liberation_Sans',Arial,sans-serif]">
          <SiteHeader />
          <Nav />
          <div className="flex bg-[linear-gradient(#aeaeae,#d2d2d2_8px,#e9e9e9_17px,#f1f1f1_26px)] bg-[length:100%_26px] bg-no-repeat">
            <Sidebar />
            <Content />
          </div>
        </div>
        <div className="flex w-[21px] flex-col items-center bg-[#f1f1f1]">
          <span className="mt-[9px] border-x-[5px] border-b-[5px] border-x-transparent border-b-[#a3a3a3]" />
          <span className="mt-[7px] h-[811px] w-[17px] bg-[#c1c1c1]" />
          <span className="mt-auto mb-[9px] border-x-[5px] border-t-[5px] border-x-transparent border-t-[#505050]" />
        </div>
      </div>
      <div className="flex h-[21px] items-center">
        <span className="ml-2 border-y-[5px] border-r-[5px] border-y-transparent border-r-[#a3a3a3]" />
        <span className="ml-2 h-[17px] w-[1827px] bg-[#c1c1c1]" />
        <span className="ml-[38px] border-y-[5px] border-l-[5px] border-y-transparent border-l-[#505050]" />
        <span className="ml-auto h-[21px] w-[21px] bg-[#dcdcdc]" />
      </div>
      <Taskbar />
    </div>
  );
}
